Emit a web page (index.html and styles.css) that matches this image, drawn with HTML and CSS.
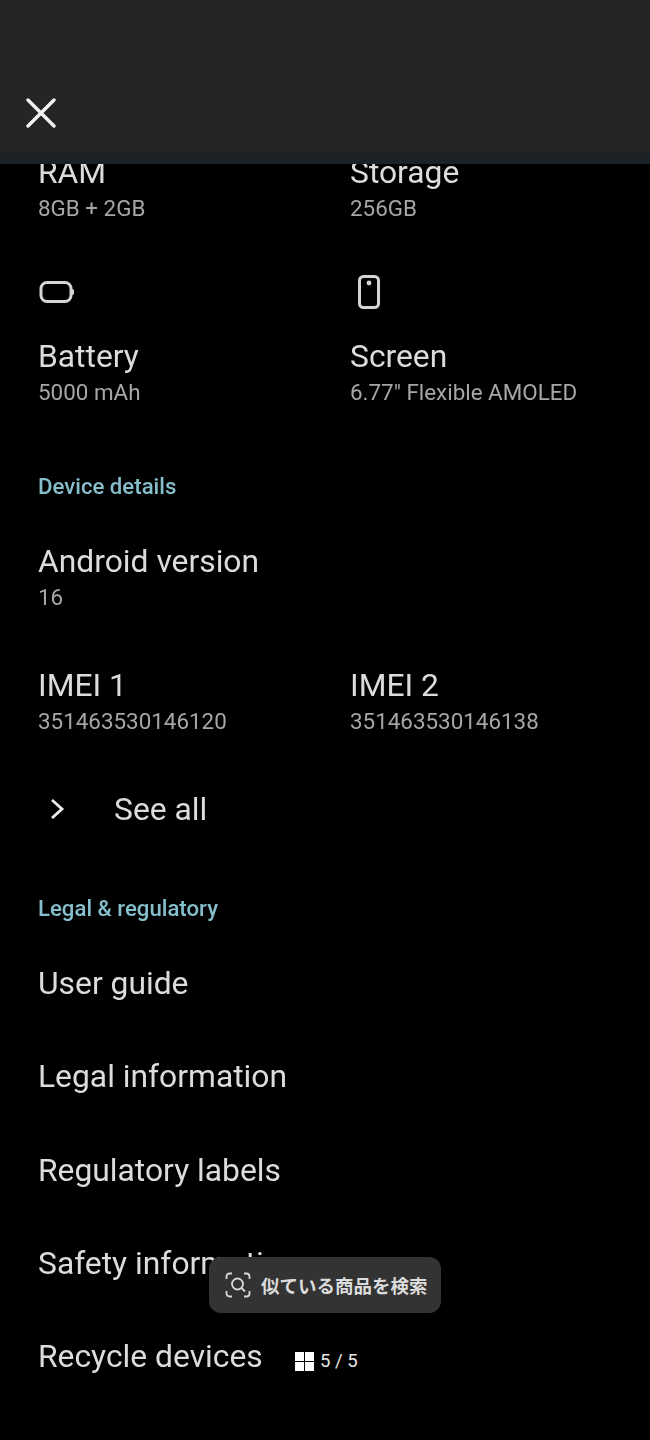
FILE: index.html
```html
<!DOCTYPE html>
<html lang="en">
<head>
    <meta charset="UTF-8">
    <meta name="viewport" content="width=device-width, initial-scale=1.0">
    <title>About phone</title>
    <link rel="stylesheet" href="styles.css">
</head>
<body>

<header class="top-bar">
    <svg class="close-icon" viewBox="0 0 30 30" width="30" height="30">
        <path d="M2 2 L28 28 M28 2 L2 28" fill="none" stroke="#f2f2f2" stroke-width="3.4" stroke-linecap="round"/>
    </svg>
</header>

<main class="viewer">
    <div class="content">

        <!-- specs -->
        <div class="spec-grid">
            <div>
                <div class="title">RAM</div>
                <div class="sub">8GB + 2GB</div>
            </div>
            <div>
                <div class="title">Storage</div>
                <div class="sub">256GB</div>
            </div>
        </div>

        <div class="spec-grid spec-icons">
            <div>
                <svg class="spec-icon" viewBox="0 0 36 36" width="36" height="36">
                    <rect x="3" y="8.500" width="30" height="19" rx="6" fill="none" stroke="#d4d4d4" stroke-width="3"/>
                    <path d="M33.500 15 a3 3 0 0 1 0 6 z" fill="#d4d4d4"/>
                </svg>
                <div class="title">Battery</div>
                <div class="sub">5000 mAh</div>
            </div>
            <div>
                <svg class="spec-icon" viewBox="0 0 36 36" width="36" height="36">
                    <rect x="9.500" y="2.500" width="19" height="31" rx="4" fill="none" stroke="#d4d4d4" stroke-width="3"/>
                    <circle cx="19" cy="9" r="2.400" fill="#d4d4d4"/>
                </svg>
                <div class="title">Screen</div>
                <div class="sub">6.77" Flexible AMOLED</div>
            </div>
        </div>

        <!-- device details -->
        <h2 class="section-head details-head">Device details</h2>
        <div class="title">Android version</div>
        <div class="sub">16</div>

        <div class="spec-grid imei-row">
            <div>
                <div class="title">IMEI 1</div>
                <div class="sub">351463530146120</div>
            </div>
            <div>
                <div class="title">IMEI 2</div>
                <div class="sub">351463530146138</div>
            </div>
        </div>

        <div class="see-all">
            <svg viewBox="0 0 16 24" width="16" height="24">
                <path d="M3 3 L13 12 L3 21" fill="none" stroke="#ececec" stroke-width="2.800"/>
            </svg>
            <span class="title">See all</span>
        </div>

        <!-- legal -->
        <h2 class="section-head legal-head">Legal &amp; regulatory</h2>
        <ul class="link-list">
            <li class="title">User guide</li>
            <li class="title">Legal information</li>
            <li class="title">Regulatory labels</li>
            <li class="title">Safety information</li>
            <li class="title">Recycle devices</li>
        </ul>
    </div>

    <!-- overlays from the image viewer -->
    <div class="search-pill">
        <svg viewBox="0 0 26 26" width="26" height="26">
            <path d="M1.500 7 V4.500 a3 3 0 0 1 3-3 H7 M19 1.500 h2.500 a3 3 0 0 1 3 3 V7 M24.500 19 v2.500 a3 3 0 0 1-3 3 H19 M7 24.500 H4.500 a3 3 0 0 1-3-3 V19" fill="none" stroke="#d8d8d8" stroke-width="1.800"/>
            <circle cx="12.500" cy="12" r="5.500" fill="none" stroke="#d8d8d8" stroke-width="1.800"/>
            <path d="M16.500 16 L20 19.500" stroke="#d8d8d8" stroke-width="1.800"/>
        </svg>
        <span>似ている商品を検索</span>
    </div>
    <div class="page-count">
        <span class="grid-icon"><i></i><i></i><i></i><i></i></span>
        <span>5 / 5</span>
    </div>
</main>

</body>
</html>
```

FILE: styles.css
```css
html, body {
    margin: 0;
    padding: 0;
    background-color: #000;
}
body {
    width: 650px;
    height: 1440px;
    overflow: hidden;
    font-family: 'Roboto', 'Noto Sans CJK JP', sans-serif;
    display: flex;
    flex-direction: column;
}
.top-bar {
    height: 152px;
    flex: none;
    background-color: #252525;
    border-bottom: 12px solid #1b2125;
    display: flex;
    align-items: flex-end;
    padding-left: 26px;
}
.close-icon {
    margin-bottom: 24px;
}
.viewer {
    flex: 1;
    position: relative;
    overflow: hidden;
}
.content {
    margin-top: -10px;
    padding-left: 38px;
    filter: blur(0.5px);
}
.title {
    font-size: 31.8px;
    line-height: 36px;
    color: #dcdcdc;
}
.sub {
    font-size: 22.4px;
    line-height: 36px;
    color: #a6a6a6;
}
.spec-grid {
    display: grid;
    grid-template-columns: 312px 1fr;
}
.spec-icons {
    margin-top: 48px;
}
.spec-icon {
    display: block;
    margin-bottom: 28px;
}
.section-head {
    margin: 0;
    font-size: 22.2px;
    line-height: 28px;
    font-weight: 500;
    color: #86bfcc;
}
.details-head {
    margin-top: 62px;
    margin-bottom: 43px;
}
.imei-row {
    margin-top: 52px;
}
.see-all {
    margin-top: 52px;
    display: flex;
    align-items: center;
    gap: 49px;
    padding-left: 11px;
}
.legal-head {
    margin-top: 67px;
    margin-bottom: 43px;
}
.link-list {
    list-style: none;
    margin: 0;
    padding: 0;
    display: flex;
    flex-direction: column;
    gap: 57.25px;
}
.search-pill {
    position: absolute;
    left: 209px;
    top: 1093px;
    width: 232px;
    height: 56px;
    box-sizing: border-box;
    padding-left: 16px;
    display: flex;
    align-items: center;
    gap: 10px;
    background-color: #333;
    border-radius: 12px;
    color: #dcdcdc;
    font-size: 18.500px;
    font-weight: 700;
    white-space: nowrap;
}
.page-count {
    position: absolute;
    left: 295px;
    top: 1184px;
    display: flex;
    align-items: center;
    gap: 6px;
    color: #e6e6e6;
    font-size: 18.500px;
    line-height: 26px;
}
.grid-icon {
    display: grid;
    grid-template-columns: 9px 9px;
    grid-template-rows: 9px 9px;
    gap: 1px;
}
.grid-icon i {
    background-color: #fff;
}
```
